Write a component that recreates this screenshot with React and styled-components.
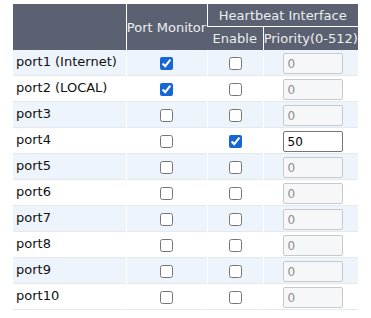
import React from "react";
import styled, { createGlobalStyle } from "styled-components";

const GlobalStyle = createGlobalStyle`
  body {
    margin: 0;
    background: #ffffff;
    font-family: "DejaVu Sans", Verdana, sans-serif;
  }
`;

const Wrapper = styled.div`
  padding: 4px 0 0 13px;
`;

const Table = styled.table`
  border-collapse: collapse;
  width: 345px;
  font-size: 13px;
  table-layout: fixed;
`;

const HeadCell = styled.th`
  background: #5b6170;
  color: #eceef2;
  font-weight: normal;
  text-align: center;
  white-space: nowrap;
  padding: 0;
  height: ${(p) => p.h || 22}px;
  border-left: 1px solid #ffffff;
  border-bottom: ${(p) => (p.divide ? "1px solid #ffffff" : "none")};
  &:first-child {
    border-left: none;
  }
`;

const Row = styled.tr`
  background: ${(p) => (p.alt ? "#eef4fc" : "#ffffff")};
  border-bottom: 1px solid #e4e9ef;
`;

const Cell = styled.td`
  height: 25px;
  padding: 0;
  line-height: 15px;
  text-align: center;
  border-left: 1px solid #ffffff;
  color: #111;
  &:first-child {
    text-align: left;
    padding: 0 0 2px 3px;
    height: 23px;
    border-left: none;
  }
`;

const Check = styled.input`
  width: 13px;
  height: 13px;
  margin: 0;
  vertical-align: middle;
  accent-color: #1766d6;
`;

const Priority = styled.input`
  display: block;
  box-sizing: border-box;
  width: 60px;
  height: 21px;
  margin: 2px 0 0 19px;
  padding: 1px 4px 0;
  font-family: "DejaVu Sans", Verdana, sans-serif;
  font-size: 12px;
  border: 1px solid ${(p) => (p.disabled ? "#c6c9cd" : "#767676")};
  border-radius: 2px;
  background: ${(p) => (p.disabled ? "#f6f7f8" : "#ffffff")};
  color: ${(p) => (p.disabled ? "#8c8c8c" : "#000")};
`;

const ports = [
  { name: "port1 (Internet)", monitor: true, enable: false, prio: "0" },
  { name: "port2 (LOCAL)", monitor: true, enable: false, prio: "0" },
  { name: "port3", monitor: false, enable: false, prio: "0" },
  { name: "port4", monitor: false, enable: true, prio: "50" },
  { name: "port5", monitor: false, enable: false, prio: "0" },
  { name: "port6", monitor: false, enable: false, prio: "0" },
  { name: "port7", monitor: false, enable: false, prio: "0" },
  { name: "port8", monitor: false, enable: false, prio: "0" },
  { name: "port9", monitor: false, enable: false, prio: "0" },
  { name: "port10", monitor: false, enable: false, prio: "0" },
];

export default function App() {
  return (
    <Wrapper>
      <GlobalStyle />
      <Table>
        <colgroup>
          <col style={{ width: 113 }} />
          <col style={{ width: 81 }} />
          <col style={{ width: 56 }} />
          <col style={{ width: 95 }} />
        </colgroup>
        <thead>
          <tr>
            <HeadCell rowSpan={2} />
            <HeadCell rowSpan={2}>Port Monitor</HeadCell>
            <HeadCell colSpan={2} divide>
              Heartbeat Interface
            </HeadCell>
          </tr>
          <tr>
            <HeadCell h={23}>Enable</HeadCell>
            <HeadCell h={23}>Priority(0-512)</HeadCell>
          </tr>
        </thead>
        <tbody>
          {ports.map((p, i) => (
            <Row key={p.name} alt={i % 2 === 0}>
              <Cell>{p.name}</Cell>
              <Cell>
                <Check type="checkbox" defaultChecked={p.monitor} />
              </Cell>
              <Cell>
                <Check type="checkbox" defaultChecked={p.enable} />
              </Cell>
              <Cell>
                <Priority type="text" defaultValue={p.prio} disabled={!p.enable} />
              </Cell>
            </Row>
          ))}
        </tbody>
      </Table>
    </Wrapper>
  );
}
